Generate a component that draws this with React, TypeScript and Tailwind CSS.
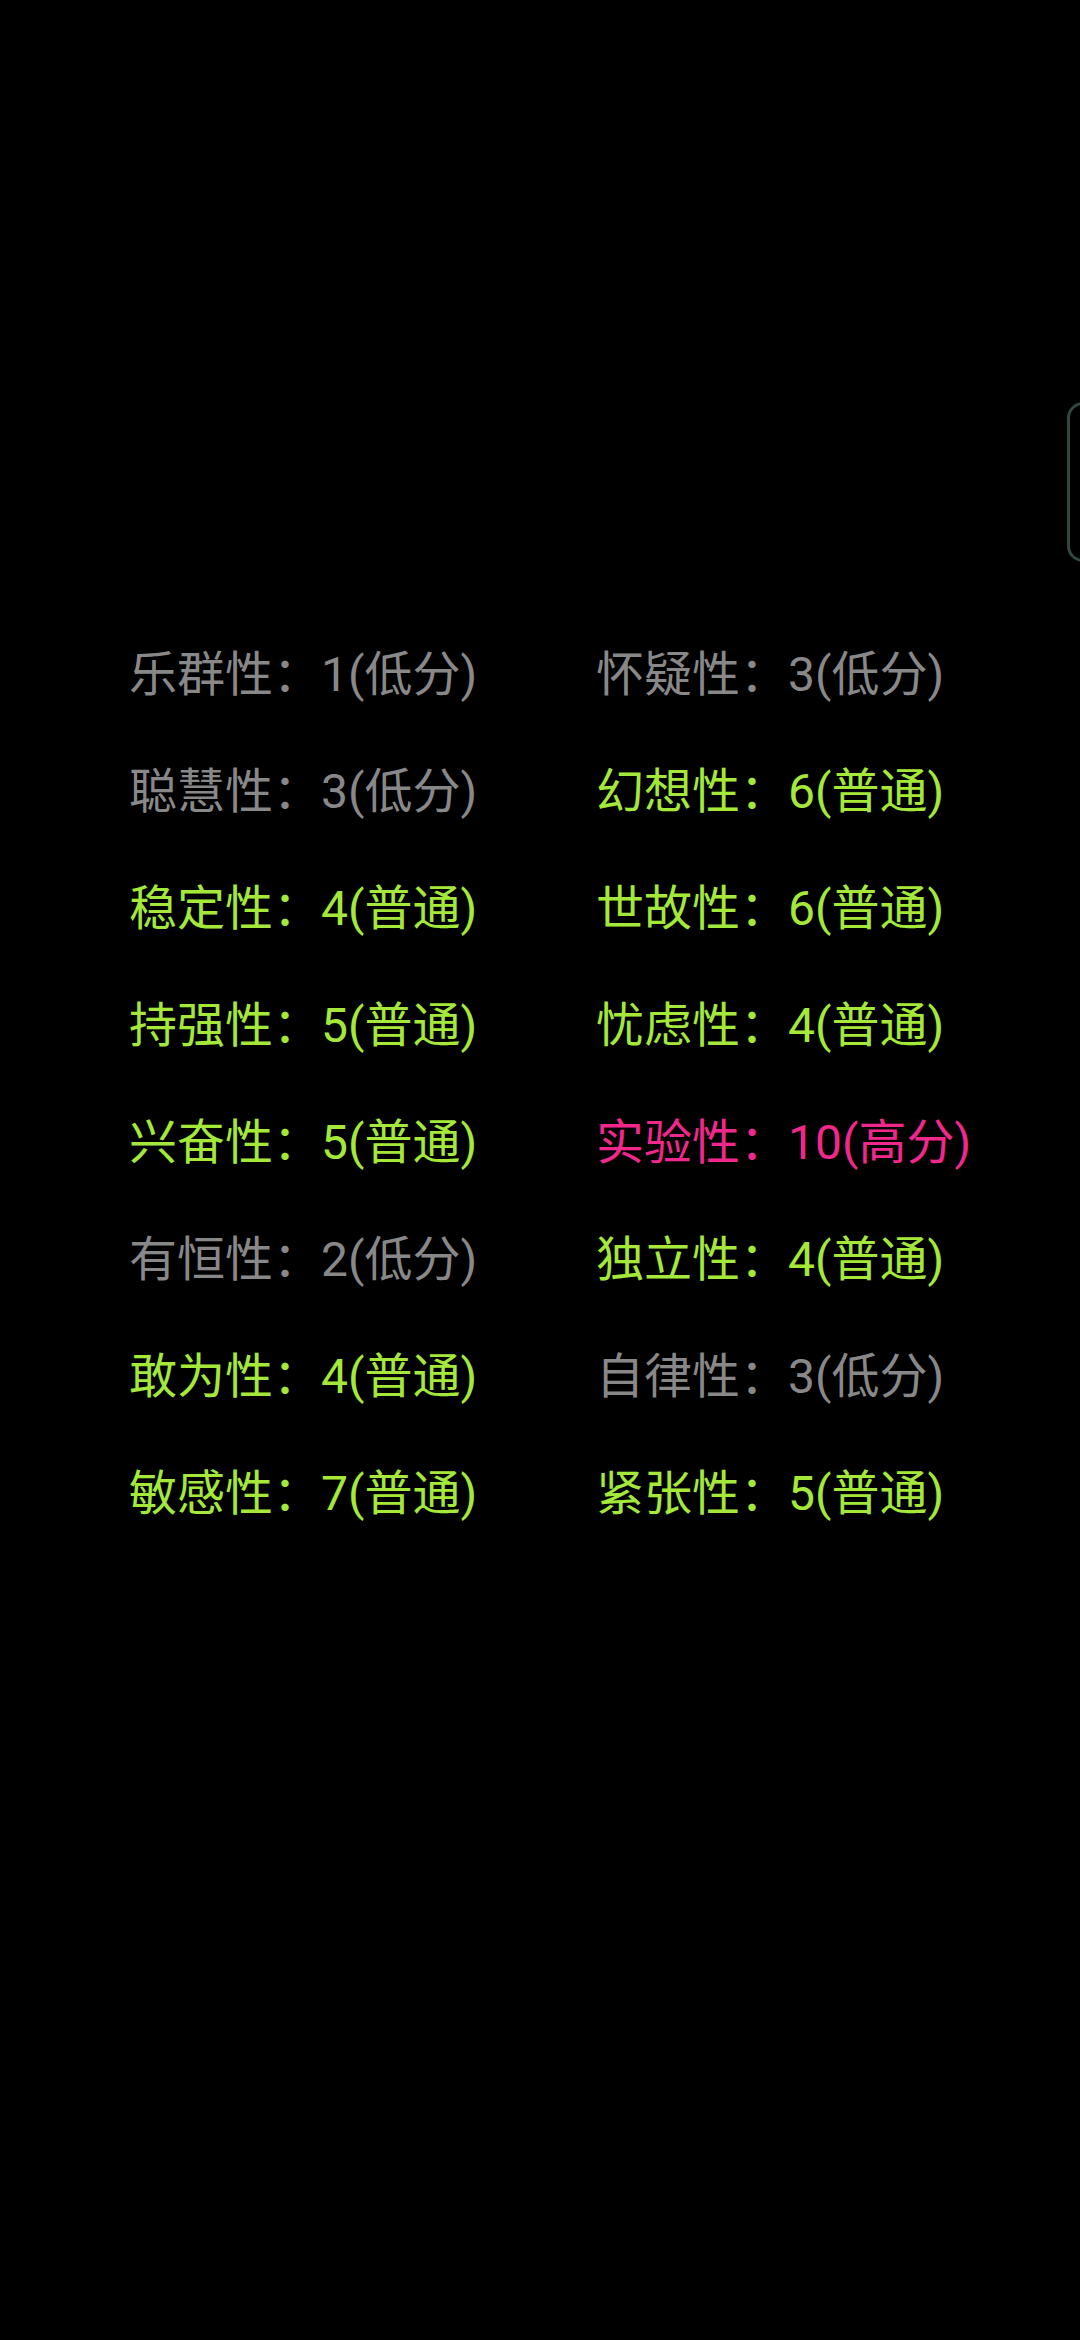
import React from "react";

type Item = { name: string; score: string; level: "low" | "mid" | "high" };

const items: Item[] = [
  { name: "乐群性", score: "1", level: "low" },
  { name: "怀疑性", score: "3", level: "low" },
  { name: "聪慧性", score: "3", level: "low" },
  { name: "幻想性", score: "6", level: "mid" },
  { name: "稳定性", score: "4", level: "mid" },
  { name: "世故性", score: "6", level: "mid" },
  { name: "持强性", score: "5", level: "mid" },
  { name: "忧虑性", score: "4", level: "mid" },
  { name: "兴奋性", score: "5", level: "mid" },
  { name: "实验性", score: "10", level: "high" },
  { name: "有恒性", score: "2", level: "low" },
  { name: "独立性", score: "4", level: "mid" },
  { name: "敢为性", score: "4", level: "mid" },
  { name: "自律性", score: "3", level: "low" },
  { name: "敏感性", score: "7", level: "mid" },
  { name: "紧张性", score: "5", level: "mid" },
];

const label = { low: "低分", mid: "普通", high: "高分" };
const color = {
  low: "text-[#888888]",
  mid: "text-[#a4e83a]",
  high: "text-[#f0288c]",
};

export default function App() {
  return (
    <div
      className="relative w-[1080px] h-[2340px] bg-black overflow-hidden"
      style={{ fontFamily: 'Roboto, "Noto Sans CJK SC", sans-serif' }}
    >
      <div className="absolute left-[1067px] top-[402px] w-[40px] h-[160px] rounded-[16px] border-[3px] border-[#2e4a3e]" />
      <div className="pt-[616px] pl-[129px] grid grid-cols-[467px_auto]">
        {items.map((it, i) => (
          <div key={i} className={`h-[117px] leading-[117px] text-[48px] whitespace-nowrap ${color[it.level]}`}>
            {it.name}：{it.score}({label[it.level]})
          </div>
        ))}
      </div>
    </div>
  );
}
